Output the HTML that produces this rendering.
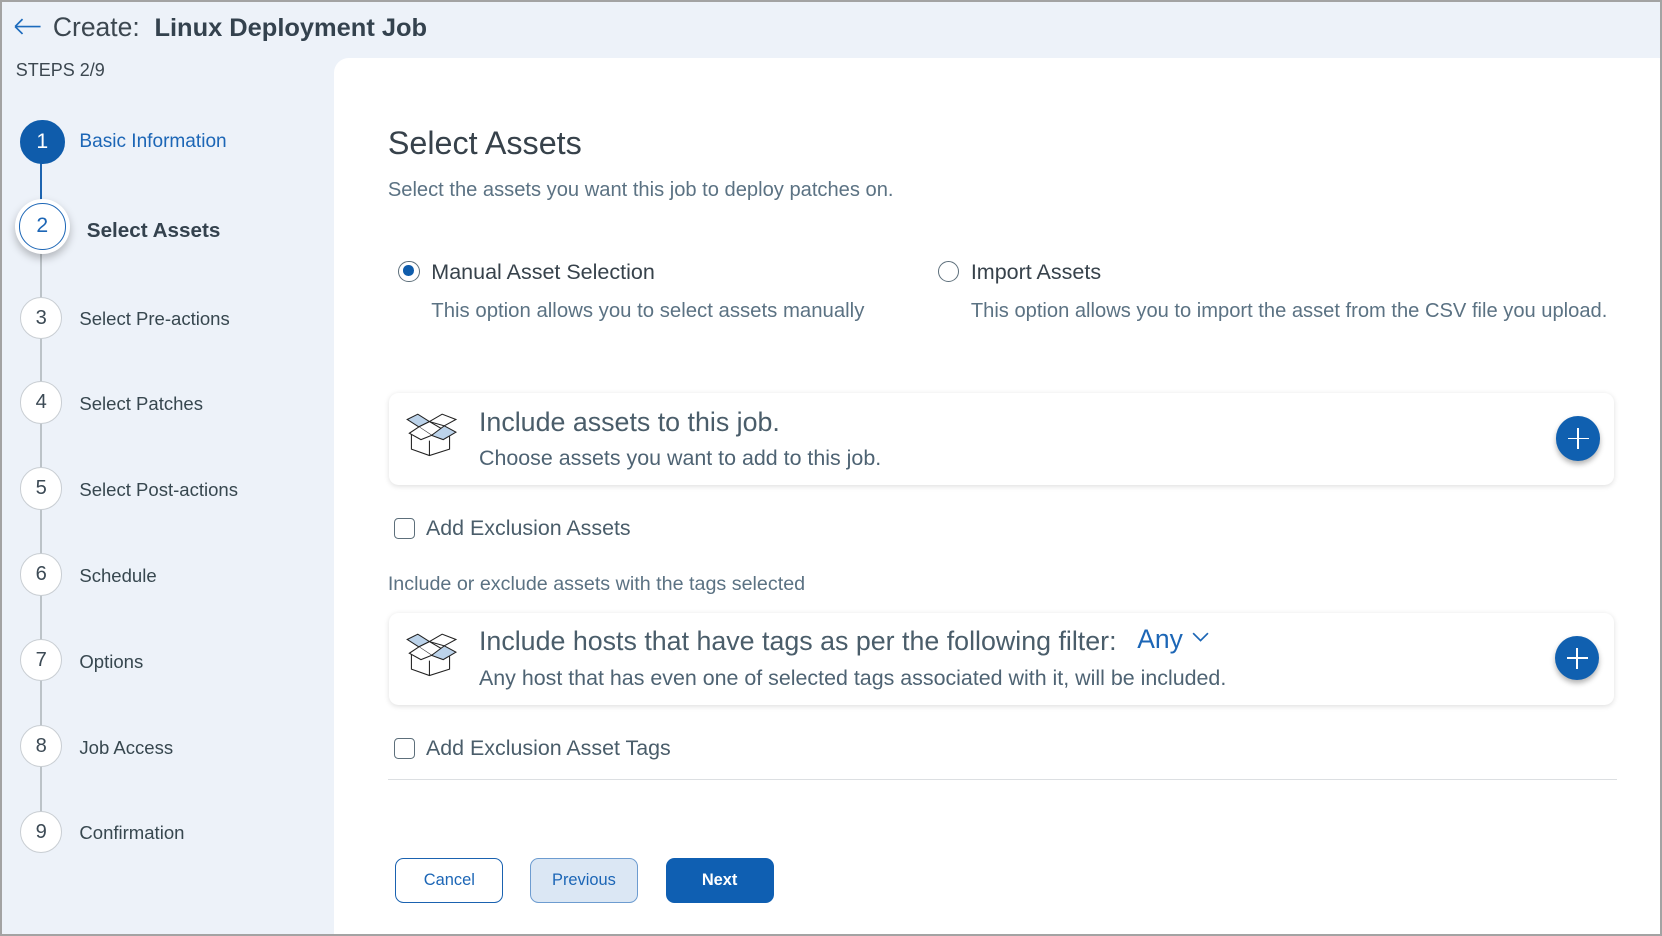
<!DOCTYPE html>
<html><head><meta charset="utf-8"><style>
*{box-sizing:border-box;margin:0;padding:0}
html,body{width:1662px;height:936px;overflow:hidden;background:#fff}
#r{zoom:1.06;position:relative;width:1568px;height:883px;background:#edf2f9;border:2px solid #a3a3a3;font-family:"Liberation Sans",Arial,sans-serif;color:#37474f;overflow:hidden}
.a{position:absolute;white-space:nowrap}
.panel{position:absolute;left:313px;top:53px;width:1260px;height:840px;background:#fff;border-top-left-radius:14px}
.c{position:absolute;width:40px;height:40px;border-radius:50%;border:1px solid #c9ced3;background:#fff;text-align:center;line-height:38px;font-size:19px;color:#3c4a55}
.lbl{position:absolute;font-size:17.5px;color:#37474f}
.card{position:absolute;left:365px;width:1156px;height:87px;background:#fff;border-radius:9px;box-shadow:0 1px 5px rgba(0,0,0,.13)}
.plus{position:absolute;width:42px;height:42px;border-radius:50%;background:#1060b0;box-shadow:0 3px 5px rgba(0,0,0,.3)}
.plus:before{content:"";position:absolute;left:11px;top:20px;width:20px;height:1.5px;background:#fff}
.plus:after{content:"";position:absolute;left:20px;top:11px;width:1.5px;height:20px;background:#fff}
.cb{position:absolute;width:20px;height:20px;border:1.5px solid #5d6f7b;border-radius:4px}
.btn{position:absolute;top:808px;width:102px;height:42px;border-radius:8px;font-size:15.5px;text-align:center;line-height:42px}
</style></head><body><div id="r">
<svg class="a" style="left:10px;top:14px" width="28" height="18" viewBox="0 0 28 18"><path d="M2 9H26M2 9L9 2M2 9L9 16" stroke="#1c6bbd" stroke-width="1.6" fill="none"/></svg>
<div class="a" style="left:48px;top:9px;font-size:25px;color:#3c4750">Create:&nbsp; <b style="color:#34424e;font-size:24px">Linux Deployment Job</b></div>
<div class="a" style="left:13px;top:55px;font-size:17px;color:#3c4750">STEPS 2/9</div>
<div class="panel"></div>
<div class="a" style="left:36px;top:150px;width:2px;height:40px;background:#1d64b0"></div>
<div class="a" style="left:36px;top:235px;width:2px;height:550px;background:#bcc3c8"></div>
<div class="c" style="left:17px;top:111px;background:#0f5cab;border-color:#0f5cab;color:#fff;font-size:20px;width:42px;height:42px;line-height:40px">1</div>
<div class="lbl" style="left:73px;top:122px;color:#1c66b6;font-size:18px">Basic Information</div>
<div class="a" style="left:12px;top:186px;width:52px;height:52px;border-radius:50%;background:#fff;box-shadow:0 4px 8px rgba(0,0,0,.25)"><div style="position:absolute;left:4px;top:4px;width:44px;height:44px;border-radius:50%;border:1.5px solid #1c66b6;text-align:center;line-height:41px;font-size:20px;color:#1c66b6">2</div></div>
<div class="lbl" style="left:80px;top:205px;font-weight:bold;font-size:19.5px;color:#34424e">Select Assets</div>
<div class="c" style="left:17px;top:278px">3</div><div class="lbl" style="left:73px;top:289px">Select Pre-actions</div>
<div class="c" style="left:17px;top:358px">4</div><div class="lbl" style="left:73px;top:369px">Select Patches</div>
<div class="c" style="left:17px;top:439px">5</div><div class="lbl" style="left:73px;top:450px">Select Post-actions</div>
<div class="c" style="left:17px;top:520px">6</div><div class="lbl" style="left:73px;top:531px">Schedule</div>
<div class="c" style="left:17px;top:601px">7</div><div class="lbl" style="left:73px;top:612px">Options</div>
<div class="c" style="left:17px;top:682px">8</div><div class="lbl" style="left:73px;top:693px">Job Access</div>
<div class="c" style="left:17px;top:763px">9</div><div class="lbl" style="left:73px;top:774px">Confirmation</div>

<div class="a" style="left:364px;top:116px;font-size:30.5px;color:#37424b">Select Assets</div>
<div class="a" style="left:364px;top:167px;font-size:19px;color:#5b7283">Select the assets you want this job to deploy patches on.</div>
<div class="a" style="left:374px;top:244px;width:20px;height:20px;border-radius:50%;border:1.5px solid #5d6f7b"><div style="position:absolute;left:3.5px;top:3.5px;width:10px;height:10px;border-radius:50%;background:#0f5cab"></div></div>
<div class="a" style="left:405px;top:243px;font-size:20.3px;color:#37424b">Manual Asset Selection</div>
<div class="a" style="left:405px;top:281px;font-size:19.2px;color:#5b7283">This option allows you to select assets manually</div>
<div class="a" style="left:883px;top:244px;width:20px;height:20px;border-radius:50%;border:1.5px solid #5d6f7b"></div>
<div class="a" style="left:914px;top:243px;font-size:20.3px;color:#37424b">Import Assets</div>
<div class="a" style="left:914px;top:281px;font-size:19px;color:#5b7283">This option allows you to import the asset from the CSV file you upload.</div>

<div class="card" style="top:369px"></div>
<svg class="a" style="left:379px;top:386px" width="52" height="46" viewBox="0 0 52 46"><path d="M3 8L13 3L24 10L14 15Z" fill="#bcd3ea" stroke="#222" stroke-width="1"/><path d="M24 10L36 3L49 8L38 14Z" fill="#fff" stroke="#222" stroke-width="1"/><path d="M14 15L24 10L36 17L26 23Z" fill="#fff" stroke="#222" stroke-width="1"/><path d="M26 23L38 14L49 20L37 27Z" fill="#bcd3ea" stroke="#222" stroke-width="1"/><path d="M14 15L5 21L16 27L26 23" fill="#fff" stroke="#222" stroke-width="1"/><path d="M7 22V36L24 42L43 36V24M24 42V28" fill="none" stroke="#222" stroke-width="1"/></svg>
<div class="a" style="left:450px;top:382px;font-size:25.3px;color:#4a5d6a">Include assets to this job.</div>
<div class="a" style="left:450px;top:419px;font-size:20.2px;color:#4e6373">Choose assets you want to add to this job.</div>
<div class="plus" style="left:1466px;top:391px"></div>

<div class="cb" style="left:370px;top:487px"></div>
<div class="a" style="left:400px;top:485px;font-size:20.2px;color:#4a5d6a">Add Exclusion Assets</div>
<div class="a" style="left:364px;top:539px;font-size:18.6px;color:#5b7283">Include or exclude assets with the tags selected</div>

<div class="card" style="top:576px"></div>
<svg class="a" style="left:379px;top:593px" width="52" height="46" viewBox="0 0 52 46"><path d="M3 8L13 3L24 10L14 15Z" fill="#bcd3ea" stroke="#222" stroke-width="1"/><path d="M24 10L36 3L49 8L38 14Z" fill="#fff" stroke="#222" stroke-width="1"/><path d="M14 15L24 10L36 17L26 23Z" fill="#fff" stroke="#222" stroke-width="1"/><path d="M26 23L38 14L49 20L37 27Z" fill="#bcd3ea" stroke="#222" stroke-width="1"/><path d="M14 15L5 21L16 27L26 23" fill="#fff" stroke="#222" stroke-width="1"/><path d="M7 22V36L24 42L43 36V24M24 42V28" fill="none" stroke="#222" stroke-width="1"/></svg>
<div class="a" style="left:450px;top:589px;font-size:25.3px;color:#4a5d6a">Include hosts that have tags as per the following filter:</div>
<div class="a" style="left:1071px;top:587px;font-size:25px;color:#1c66b6">Any</div>
<svg class="a" style="left:1122px;top:592px" width="18" height="12" viewBox="0 0 18 12"><path d="M2 3L9 10L16 3" stroke="#1c66b6" stroke-width="1.6" fill="none"/></svg>
<div class="a" style="left:450px;top:626px;font-size:20.2px;color:#4e6373">Any host that has even one of selected tags associated with it, will be included.</div>
<div class="plus" style="left:1465px;top:598px"></div>

<div class="cb" style="left:370px;top:694px"></div>
<div class="a" style="left:400px;top:692px;font-size:20.2px;color:#4a5d6a">Add Exclusion Asset Tags</div>
<div class="a" style="left:364px;top:733px;width:1160px;height:1px;background:#dcdfe2"></div>

<div class="btn" style="left:371px;border:1px solid #1a62b0;color:#1c66b6;background:#fff;line-height:40px">Cancel</div>
<div class="btn" style="left:498px;border:1px solid #6d9cd0;color:#1c66b6;background:#dbe7f4;line-height:40px">Previous</div>
<div class="btn" style="left:626px;background:#0f5fb2;color:#fff;font-weight:bold">Next</div>
</div></body></html>
